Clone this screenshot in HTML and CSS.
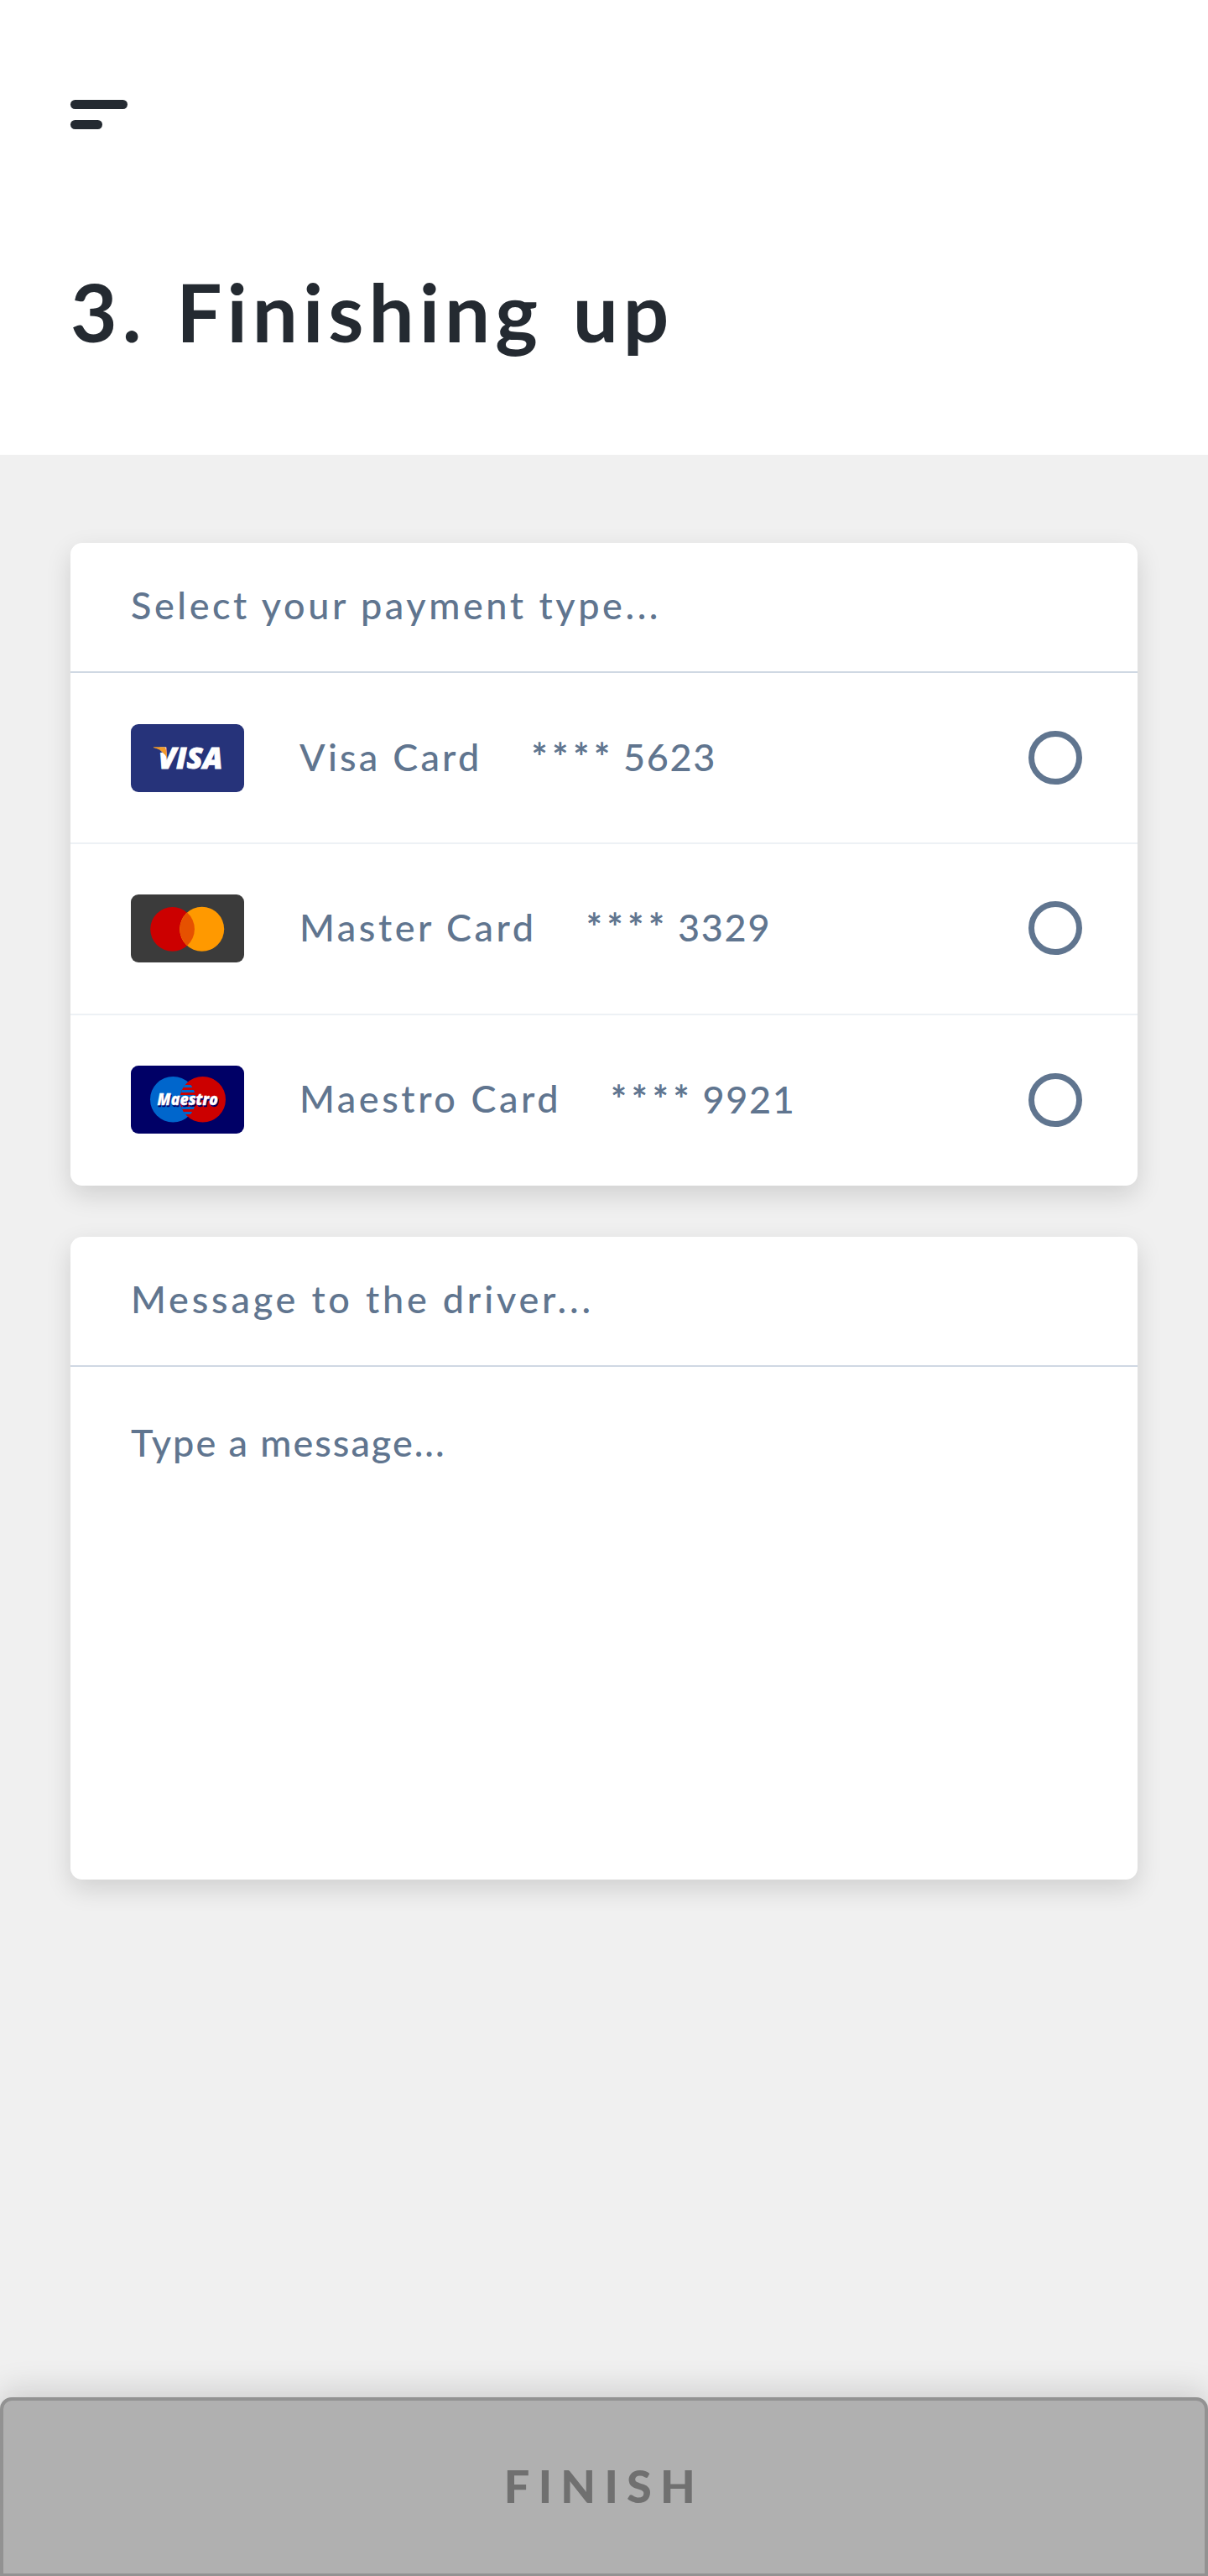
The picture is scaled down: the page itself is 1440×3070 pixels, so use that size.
FILE: index.html
```html
<!DOCTYPE html>
<html lang="en">
<head>
<meta charset="utf-8">
<title>Finishing up</title>
<link rel="stylesheet" href="styles.css">
</head>
<body>
<div class="screen">
  <header class="top">
    <button class="menu" aria-label="Menu"><span class="bar"></span><span class="bar bar-short"></span></button>
    <h1 class="title">3. Finishing up</h1>
  </header>

  <main class="content">
    <section class="card">
      <h2 class="card-head head-payment">Select your payment type...</h2>
      <ul class="methods">
        <li class="method">
          <svg class="brand" viewBox="0 0 135 81">
            <rect width="135" height="81" rx="9" fill="#26337a"/>
            <text class="visa" x="32.4" y="53.4" textLength="77" lengthAdjust="spacingAndGlyphs">VISA</text>
            <path d="M27 27.2H39.5Q41.3 27.4 41.6 29L43.6 41.5Q39.5 31.5 27 28.2Z" fill="#f09a2a"/>
            <path d="M27 28.2Q34 29.6 38 33.8L32 34Z" fill="#26337a"/>
          </svg>
          <span class="name name-visa">Visa Card</span>
          <span class="number"><span class="mask">****</span> 5623</span>
          <span class="radio"></span>
        </li>
        <li class="method">
          <svg class="brand" viewBox="0 0 135 81">
            <rect width="135" height="81" rx="9" fill="#3b3b3b"/>
            <circle cx="49.6" cy="41.3" r="26.4" fill="#cc0000"/>
            <circle cx="84.7" cy="41.3" r="26.5" fill="#ff9900"/>
            <path d="M67.1 21.6A26.4 26.4 0 0 1 67.1 61A26.5 26.5 0 0 1 67.1 21.6Z" fill="#e65100"/>
          </svg>
          <span class="name">Master Card</span>
          <span class="number"><span class="mask">****</span> 3329</span>
          <span class="radio"></span>
        </li>
        <li class="method">
          <svg class="brand" viewBox="0 0 135 81">
            <defs><clipPath id="lens"><path d="M68 19.6A27.3 27.3 0 0 1 68 61A27.3 27.3 0 0 1 68 19.6Z"/></clipPath></defs>
            <rect width="135" height="81" rx="9" fill="#000066"/>
            <circle cx="50.3" cy="40.3" r="27.3" fill="#0066cc"/>
            <circle cx="85.7" cy="40.3" r="27.3" fill="#cc0000"/>
            <path clip-path="url(#lens)" d="M55 23h25v3H55zM55 29h25v3H55zM55 35h25v3H55zM55 41h25v3H55zM55 49h25v3H55zM55 55h25v3H55z" fill="#0066cc"/>
            <text class="maestro maestro-shadow" x="32.6" y="48.6" textLength="72.5" lengthAdjust="spacingAndGlyphs">Maestro</text>
            <text class="maestro" x="31.6" y="47.2" textLength="72.5" lengthAdjust="spacingAndGlyphs">Maestro</text>
          </svg>
          <span class="name">Maestro Card</span>
          <span class="number"><span class="mask">****</span> 9921</span>
          <span class="radio"></span>
        </li>
      </ul>
    </section>

    <section class="card">
      <h2 class="card-head head-message">Message to the driver...</h2>
      <p class="message">Type a message...</p>
    </section>
  </main>

  <button class="finish">FINISH</button>
</div>
</body>
</html>
```
FILE: styles.css
```css
* { box-sizing: border-box; margin: 0; padding: 0; }

body {
  font-family: Lato, "Open Sans", sans-serif;
  font-weight: 500;
  font-size: 45px;
  line-height: 54px;
  color: #60758f;
  background: #f0f0f0;
}

.screen {
  display: flex;
  flex-direction: column;
  height: 3070px;
  overflow: hidden;
}

.top {
  height: 542px;
  padding: 119px 84px 0;
  background: #fff;
}

.menu {
  display: flex;
  flex-direction: column;
  gap: 13px;
  border: 0;
  background: none;
}

.bar {
  width: 68px;
  height: 11px;
  border-radius: 5.5px;
  background: #242a31;
}

.bar-short { width: 38px; }

.title {
  margin-top: 159px;
  font-size: 96px;
  font-weight: 700;
  line-height: 116px;
  letter-spacing: 6px;
  word-spacing: 6.4px;
  color: #242a31;
}

.content {
  flex: 1;
  display: flex;
  flex-direction: column;
  gap: 61px;
  padding: 105px 84px 0;
}

.card {
  border-radius: 14px;
  background: #fff;
  box-shadow: 0 11px 30px rgba(0, 0, 0, .138);
}

.card-head {
  display: flex;
  align-items: center;
  height: 155px;
  padding: 0 72px 6px;
  border-bottom: 2px solid #cfd8e3;
  font-size: 45px;
  font-weight: 500;
}

.head-payment { letter-spacing: 3.56px; }
.head-message { letter-spacing: 3.8px; }

.methods { list-style: none; }

.method {
  display: flex;
  align-items: center;
  height: 204px;
  padding: 0 66px 0 72px;
  border-bottom: 2px solid #edf1f5;
}

.method + .method { padding-bottom: 2px; }

.method:last-child { height: 203px; border-bottom: 0; }

.brand { width: 135px; height: 81px; }

.visa {
  font: italic 800 36px "Open Sans", sans-serif;
  fill: #fff;
  stroke: #fff;
  stroke-width: .9;
}

.maestro {
  font: italic 800 18.5px "Open Sans", sans-serif;
  fill: #fff;
  stroke: #fff;
  stroke-width: .3;
}

.maestro-shadow { fill: #000066; stroke: #000066; }

.name {
  margin-left: 66px;
  padding-bottom: 3px;
  letter-spacing: 3.54px;
}

.name-visa { letter-spacing: 3.23px; }

.number {
  margin-left: 59px;
  padding-bottom: 2px;
  letter-spacing: 1.7px;
  word-spacing: -3px;
}

.mask {
  font-weight: 700;
  letter-spacing: 5.7px;
}

.radio {
  width: 64px;
  height: 64px;
  margin-left: auto;
  border: 7px solid #60758f;
  border-radius: 50%;
}

.message {
  height: 611px;
  padding: 63px 72px;
  letter-spacing: 1.98px;
}

.finish {
  height: 213px;
  padding-bottom: 2px;
  border: 4px solid #929292;
  border-bottom-width: 3px;
  border-radius: 14px 14px 0 0;
  background: #b0b0b0;
  box-shadow: 0 -9px 36px rgba(0, 0, 0, .145);
  font: 900 54px/64px Lato, sans-serif;
  letter-spacing: 10.3px;
  color: #707070;
}
```
